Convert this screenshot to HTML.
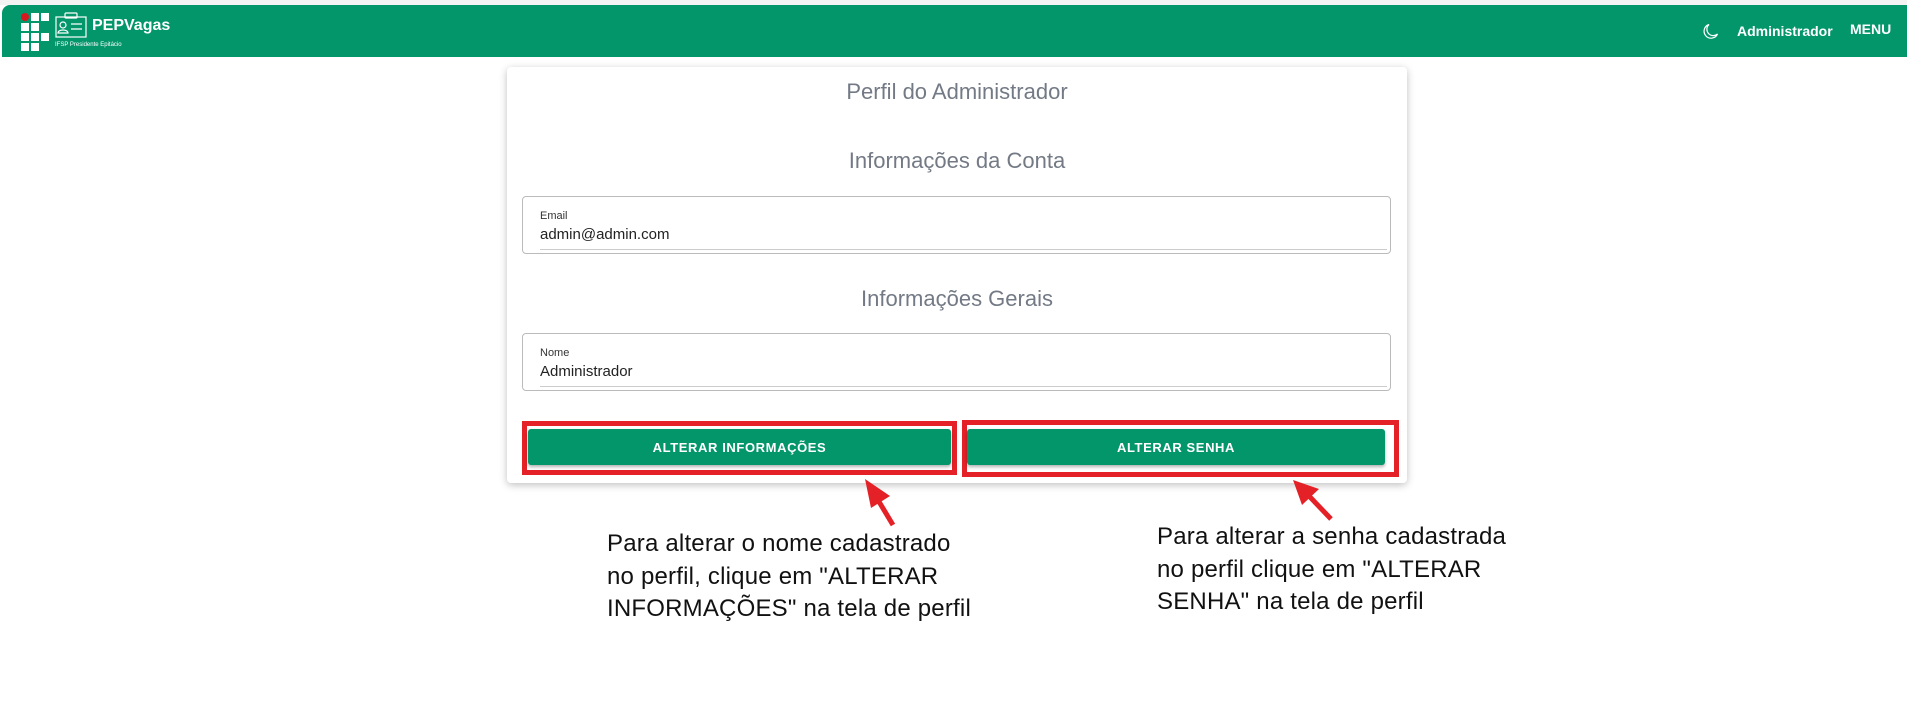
<!DOCTYPE html>
<html><head><meta charset="utf-8"><style>
*{margin:0;padding:0;box-sizing:border-box}
body{width:1907px;height:713px;background:#fff;font-family:"Liberation Sans",sans-serif;position:relative;overflow:hidden}
.top{position:absolute;left:0;top:0;width:1907px;height:5px;background:#f3f3f3}
.hdr{position:absolute;left:2px;top:5px;width:1905px;height:52px;background:#03966b;border-top-left-radius:8px}
.sq{position:absolute;width:8px;height:8px;background:#fff}
.card{position:absolute;left:507px;top:67px;width:900px;height:416px;background:#fff;box-shadow:0 2px 8px rgba(0,0,0,.25);border-radius:4px}
.h{position:absolute;left:0;width:900px;text-align:center;color:#737a85;font-size:22px}
.fld{position:absolute;left:15px;width:869px;height:58px;border:1px solid #bbb;border-radius:4px}
.fld .l{position:absolute;left:17px;top:13px;font-size:11px;color:#333}
.fld .v{position:absolute;left:17px;top:29px;font-size:15px;color:#222}
.fld .u{position:absolute;left:17px;right:3px;bottom:3px;height:1px;background:#ccc}
.red{position:absolute;border:5px solid #e42127}
.btn{position:absolute;height:36px;background:#03966b;color:#fff;font-weight:bold;font-size:13px;letter-spacing:.6px;display:flex;align-items:center;justify-content:center;border-radius:3px;box-shadow:0 2px 3px rgba(0,0,0,.3)}
.ann{position:absolute;font-size:24px;line-height:32.5px;color:#111;letter-spacing:0.2px}
</style></head><body>
<div class="top"></div>
<div class="hdr">
 <div style="position:absolute;left:19px;top:8px">
  <div class="sq" style="left:0;top:0;background:#d7191f;border-radius:50%"></div>
  <div class="sq" style="left:10px;top:0"></div><div class="sq" style="left:20px;top:0"></div>
  <div class="sq" style="left:0;top:10px"></div><div class="sq" style="left:10px;top:10px"></div>
  <div class="sq" style="left:0;top:20px"></div><div class="sq" style="left:10px;top:20px"></div><div class="sq" style="left:20px;top:20px"></div>
  <div class="sq" style="left:0;top:30px"></div><div class="sq" style="left:10px;top:30px"></div>
 </div>
 <svg style="position:absolute;left:53px;top:7px" width="32" height="26" viewBox="0 0 32 26" fill="none" stroke="#fff" stroke-width="1.2">
  <rect x="1" y="5" width="30" height="20"/><rect x="10" y="1" width="12" height="5" rx="1"/>
  <circle cx="8" cy="13" r="3"/><path d="M3 21c0-4 10-4 10 0z"/><path d="M16 12h11M16 17h11"/>
 </svg>
 <div style="position:absolute;left:90px;top:12px;color:#fff;font-weight:bold;font-size:16px">PEPVagas</div>
 <div style="position:absolute;left:53px;top:37px;color:#fff;font-size:6px">IFSP Presidente Epitácio</div>
 <svg style="position:absolute;left:1701px;top:18px" width="16" height="16" viewBox="0 0 16 16" fill="none" stroke="#fff" stroke-width="1.2"><path d="M6 1.5A7 7 0 1 0 14.5 11 6 6 0 0 1 6 1.5z"/></svg>
 <div style="position:absolute;left:1735px;top:18px;color:#fff;font-weight:bold;font-size:14px">Administrador</div>
 <div style="position:absolute;left:1848px;top:16px;color:#fff;font-weight:bold;font-size:14px">MENU</div>
</div>
<div class="card">
 <div class="h" style="top:12px">Perfil do Administrador</div>
 <div class="h" style="top:81px">Informações da Conta</div>
 <div class="fld" style="top:129px"><div class="l">Email</div><div class="v">admin@admin.com</div><div class="u"></div></div>
 <div class="h" style="top:219px">Informações Gerais</div>
 <div class="fld" style="top:266px"><div class="l">Nome</div><div class="v">Administrador</div><div class="u"></div></div>
</div>
<div class="red" style="left:522px;top:421px;width:435px;height:54px"></div>
<div class="red" style="left:962px;top:420px;width:437px;height:57px"></div>
<div class="btn" style="left:528px;top:429px;width:423px">ALTERAR INFORMAÇÕES</div>
<div class="btn" style="left:967px;top:429px;width:418px">ALTERAR SENHA</div>
<svg style="position:absolute;left:0;top:0" width="1907" height="713">
 <path d="M893 525L878 500" stroke="#e42127" stroke-width="5"/>
 <polygon points="865,479 890,496 871,508" fill="#e42127"/>
 <path d="M1331 519L1310 497" stroke="#e42127" stroke-width="5"/>
 <polygon points="1293,480 1319,489 1302,505" fill="#e42127"/>
</svg>
<div class="ann" style="left:607px;top:528px">Para alterar o nome cadastrado<br>no perfil, clique em "ALTERAR<br>INFORMAÇÕES" na tela de perfil</div>
<div class="ann" style="left:1157px;top:521px">Para alterar a senha cadastrada<br>no perfil clique em "ALTERAR<br>SENHA" na tela de perfil</div>
</body></html>
